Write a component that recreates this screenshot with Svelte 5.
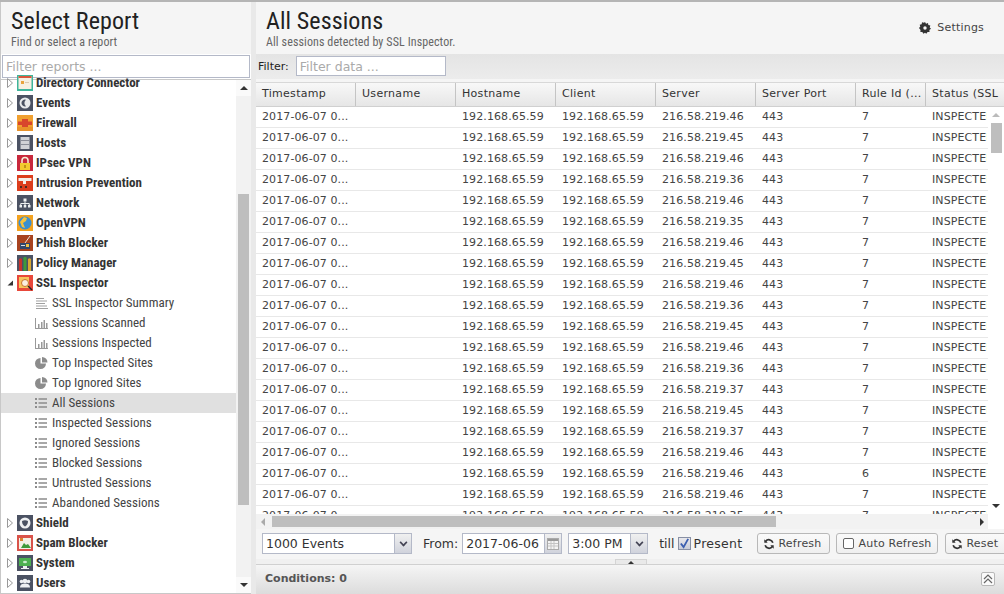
<script>
  const reports = [
    { name: "Directory Connector", icon: "directory" },
    { name: "Events", icon: "events" },
    { name: "Firewall", icon: "firewall" },
    { name: "Hosts", icon: "hosts" },
    { name: "IPsec VPN", icon: "ipsec" },
    { name: "Intrusion Prevention", icon: "intrusion" },
    { name: "Network", icon: "network" },
    { name: "OpenVPN", icon: "openvpn" },
    { name: "Phish Blocker", icon: "phish" },
    { name: "Policy Manager", icon: "policy" },
    { name: "SSL Inspector", icon: "ssl", open: true },
    { name: "Shield", icon: "shield" },
    { name: "Spam Blocker", icon: "spam" },
    { name: "System", icon: "system" },
    { name: "Users", icon: "users" }
  ];

  const sslReports = [
    { name: "SSL Inspector Summary", type: "text" },
    { name: "Sessions Scanned", type: "bars" },
    { name: "Sessions Inspected", type: "bars" },
    { name: "Top Inspected Sites", type: "pie" },
    { name: "Top Ignored Sites", type: "pie" },
    { name: "All Sessions", type: "list", selected: true },
    { name: "Inspected Sessions", type: "list" },
    { name: "Ignored Sessions", type: "list" },
    { name: "Blocked Sessions", type: "list" },
    { name: "Untrusted Sessions", type: "list" },
    { name: "Abandoned Sessions", type: "list" }
  ];

  const columns = [
    { title: "Timestamp", width: 100 },
    { title: "Username", width: 100 },
    { title: "Hostname", width: 100 },
    { title: "Client", width: 100 },
    { title: "Server", width: 100 },
    { title: "Server Port", width: 100 },
    { title: "Rule Id (...", width: 70 },
    { title: "Status (SSL", width: 100 }
  ];

  const servers = [46, 45, 46, 36, 46, 35, 46, 45, 46, 36, 45, 46, 36, 37, 45, 37, 46, 46, 46, 35, 46];
</script>

{#snippet reportIcon(icon)}
  <svg class="icon" viewBox="0 0 16 16" width="16" height="16">
    {#if icon === "directory"}
      <rect width="16" height="16" fill="#3fb59b" /><rect x="1.500" y="1" width="13" height="13" fill="#f6efe2" /><rect x="1.500" y="1" width="13" height="2" fill="#d9583b" /><rect x="4" y="6" width="3" height="3" fill="#e8a33d" /><rect x="8" y="7" width="4" height="1" fill="#d9c8b0" />
    {:else if icon === "events"}
      <rect width="16" height="16" fill="#4b5263" /><circle cx="8" cy="8" r="5.500" fill="#e8eaec" /><path d="M9 4.800a3.400 3.400 0 1 0 0 6.400 4 4 0 0 1 0-6.400z" fill="#4b5263" />
    {:else if icon === "firewall"}
      <rect width="16" height="16" fill="#f0a030" /><rect x="1" y="6.500" width="14" height="3.500" fill="#d8452c" /><rect x="5" y="4" width="6" height="8" fill="#d8452c" /><rect y="12" width="16" height="4" fill="#e8922a" />
    {:else if icon === "hosts"}
      <rect width="16" height="16" fill="#4b5263" /><rect x="3.500" y="2" width="9" height="12" fill="#d0d2d6" /><path d="M3.500 5.500h9M3.500 9.500h9" stroke="#8a8e98" />
    {:else if icon === "ipsec"}
      <rect width="16" height="16" fill="#c8283c" /><path d="M5 8V5.500a3 3 0 0 1 6 0V8" fill="none" stroke="#f6f0d8" stroke-width="1.500" /><rect x="3" y="8" width="10" height="7" fill="#f3c92f" /><rect x="7.300" y="10" width="1.400" height="3" fill="#a87c10" />
    {:else if icon === "intrusion"}
      <rect width="16" height="16" fill="#dc3d1c" /><path d="M1.500 3h13v3H9v3H6V6H1.500z" fill="#f4eee8" /><rect x="3" y="11" width="2" height="2" fill="#4a2a22" /><rect x="8" y="11" width="2" height="2" fill="#4a2a22" />
    {:else if icon === "network"}
      <rect width="16" height="16" fill="#4b5263" /><path d="M6.500 3.500h3v3h-3zM2.500 10h2.500v2.500H2.500zM6.750 10h2.500v2.500h-2.500zM11 10h2.500v2.500H11z" fill="#eef0f2" /><path d="M8 6.500V10M3.750 10V8.500h8.500V10" fill="none" stroke="#eef0f2" />
    {:else if icon === "openvpn"}
      <rect width="16" height="16" fill="#f3a21f" /><circle cx="8" cy="8" r="6.500" fill="#3a8fd0" /><path d="M7 2l3 1-1 3-3 2 2 5-3-1-2-5z" fill="#f6c23e" />
    {:else if icon === "phish"}
      <rect width="16" height="16" fill="#a8431f" /><path d="M13 1L8 8" stroke="#e8e0d8" /><rect x="3" y="8" width="10" height="6" fill="#30476b" /><rect x="9" y="9" width="3" height="3" fill="#f0c040" /><rect x="4" y="10" width="4" height="1" fill="#d8dee8" />
    {:else if icon === "policy"}
      <rect width="16" height="16" fill="#4b5263" /><rect x="2" y="6" width="3" height="10" fill="#c8322c" /><rect x="6.500" y="4" width="3" height="12" fill="#3f9a3a" /><rect x="11" y="6" width="3" height="10" fill="#d8a832" /><circle cx="3.500" cy="5" r="1.700" fill="#c8322c" /><circle cx="8" cy="3.500" r="1.700" fill="#3f9a3a" /><circle cx="12.500" cy="5" r="1.700" fill="#d8a832" />
    {:else if icon === "ssl"}
      <rect width="16" height="16" fill="#e8483a" /><rect x="2" y="2" width="10" height="11" fill="#f6c55c" /><circle cx="8" cy="8" r="3.500" fill="#fbeee0" stroke="#c9732c" /><path d="M11 11l4 4" stroke="#222" stroke-width="1.500" />
    {:else if icon === "shield"}
      <rect width="16" height="16" fill="#4b5263" /><circle cx="8" cy="8" r="5.500" fill="#eef0f2" /><path d="M5 6q3-1.500 6 0 0 3.500-3 5.500Q5 9.500 5 6z" fill="#4b5263" />
    {:else if icon === "spam"}
      <rect width="16" height="16" fill="#d9534a" /><rect x="2" y="3" width="12" height="11" fill="#f3f0e4" /><path d="M4 13l3-5 2 2 2-1 3 4z" fill="#3f9a3a" /><rect x="3" y="3" width="3" height="3" fill="#d9832c" />
    {:else if icon === "system"}
      <rect width="16" height="16" fill="#4b5263" /><rect x="2" y="3" width="12" height="8" fill="#4caf50" /><ellipse cx="8" cy="7" rx="2" ry="1.300" fill="#c8eccb" /><rect x="6" y="11" width="4" height="2" fill="#eef0f2" /><rect x="4" y="13" width="8" height="1" fill="#eef0f2" />
    {:else if icon === "users"}
      <rect width="16" height="16" fill="#4b5263" /><circle cx="4.500" cy="6.500" r="1.800" fill="#eef0f2" /><circle cx="11.500" cy="6.500" r="1.800" fill="#eef0f2" /><circle cx="8" cy="6" r="2.300" fill="#eef0f2" /><path d="M3 12.500q0-4 5-4t5 4z" fill="#eef0f2" />
    {/if}
  </svg>
{/snippet}

{#snippet leafIcon(type)}
  <svg class="leaf-icon" viewBox="0 0 13 14" width="13" height="14" fill="#8c8c8c">
    {#if type === "text"}
      <path d="M1 2h8v1H1zM1 4.500h11v1H1zM1 7h9v1H1zM1 9.500h11v1H1zM1 12h12v1H1z" fill="#a0a0a0" />
    {:else if type === "bars"}
      <path d="M0 2h1v10h12v1H0zM3 8h1.500v4H3zM6 6h1.500v6H6zM8.500 4H10v8H8.500zM11 7h1.500v5H11z" fill="#999" />
    {:else if type === "pie"}
      <path d="M5.500 2a5.500 5.500 0 1 0 5.500 5.500H5.500z" /><path d="M7 1a5.500 5.500 0 0 1 5.500 5.500H7z" />
    {:else}
      <path d="M0 2h2v2H0zM0 6h2v2H0zM0 10h2v2H0zM3.500 2.300H12v1.500H3.500zM3.500 6.300H12v1.500H3.500zM3.500 10.300H12v1.500H3.500z" />
    {/if}
  </svg>
{/snippet}

{#snippet refreshIcon()}
  <svg class="btn-icon" viewBox="0 0 14 14" width="12" height="12">
    <path d="M11.500 5.500A4.800 4.800 0 0 0 3 4M2.500 8.500A4.800 4.800 0 0 0 11 10" fill="none" stroke="#333" stroke-width="2" />
    <path d="M1.500 1.500v4h4zM12.500 12.500v-4h-4z" fill="#333" />
  </svg>
{/snippet}

<div class="page">
  <aside class="left">
    <header class="head">
      <h1>Select Report</h1>
      <p>Find or select a report</p>
    </header>
    <input class="tree-filter" placeholder="Filter reports ..." />
    <div class="tree-wrap">
      <div class="tree">
        {#each reports as report}
          <div class="node">
            {#if report.open}
              <svg class="arrow" viewBox="0 0 6 10" width="6" height="10"><path d="M6 2.500v5H0.500z" fill="#333" /></svg>
            {:else}
              <svg class="arrow" viewBox="0 0 6 10" width="6" height="10"><path d="M0.500 0.500L5.500 5 0.500 9.500z" fill="#fff" stroke="#999" /></svg>
            {/if}
            {@render reportIcon(report.icon)}
            <span class="node-name">{report.name}</span>
          </div>
          {#if report.open}
            {#each sslReports as leaf}
              <div class={leaf.selected ? "leaf selected" : "leaf"}>
                {@render leafIcon(leaf.type)}
                <span class="leaf-name">{leaf.name}</span>
              </div>
            {/each}
          {/if}
        {/each}
      </div>
      <div class="tree-scroll">
        <span class="tri up"></span>
        <div class="tree-track"><div class="tree-thumb"></div></div>
        <span class="tri down"></span>
      </div>
    </div>
  </aside>

  <main class="right">
    <header class="head main-head">
      <div>
        <h1>All Sessions</h1>
        <p>All sessions detected by SSL Inspector.</p>
      </div>
      <button class="settings">
        <svg viewBox="0 0 14 14" width="12" height="12">
          <path d="M7 0l1.200 2 2.300-.7.400 2.300 2.300.5-.7 2.200 1.500 1.700-1.900 1.300.2 2.300-2.300.1L8.500 13.800 7 12.500l-1.900 1.300-1.200-2-2.300-.1.200-2.300L0 7l1.500-1.700L.8 3.100l2.300-.5.400-2.300 2.300.7z" fill="#333" />
          <circle cx="7" cy="7" r="2" fill="#f5f5f5" />
        </svg>
        Settings
      </button>
    </header>

    <div class="filter-bar">
      <span>Filter:</span>
      <input placeholder="Filter data ..." />
    </div>

    <div class="grid">
      <div class="grid-head">
        {#each columns as col}
          <div class="th" style="width: {col.width}px">{col.title}</div>
        {/each}
      </div>
      <div class="grid-body">
        <div class="rows">
          {#each servers as server, i}
            <div class="row">
              <div class="td" style="width: 100px">2017-06-07 0...</div>
              <div class="td" style="width: 100px"></div>
              <div class="td" style="width: 100px">192.168.65.59</div>
              <div class="td" style="width: 100px">192.168.65.59</div>
              <div class="td" style="width: 100px">216.58.219.{server}</div>
              <div class="td" style="width: 100px">443</div>
              <div class="td" style="width: 70px">{i === 17 ? 6 : 7}</div>
              <div class="td" style="width: 61px">INSPECTED</div>
            </div>
          {/each}
        </div>
        <div class="v-scroll">
          <span class="tri up light"></span>
          <div class="v-track"><div class="v-thumb"></div></div>
          <span class="tri down"></span>
        </div>
      </div>
      <div class="h-scroll">
        <span class="tri left-tri"></span>
        <div class="h-track"><div class="h-thumb"></div></div>
        <span class="tri right-tri"></span>
        <div class="corner"></div>
      </div>
    </div>

    <div class="toolbar">
      <div class="combo events">
        <span class="combo-value">1000 Events</span>
        <span class="combo-btn"><span class="chev"></span></span>
      </div>
      <span class="from">From:</span>
      <div class="combo date">
        <span class="combo-value">2017-06-06</span>
        <span class="combo-btn">
          <svg viewBox="0 0 12 12" width="12" height="12">
            <rect x="0.500" y="0.500" width="11" height="11" fill="#f4f4f4" stroke="#aaa" />
            <rect x="1" y="1" width="10" height="2" fill="#999" />
            <path d="M1 5.500h10M1 8h10M4 3v8M7 3v8" stroke="#c4c4c4" fill="none" />
          </svg>
        </span>
      </div>
      <div class="combo time">
        <span class="combo-value">3:00 PM</span>
        <span class="combo-btn"><span class="chev"></span></span>
      </div>
      <span class="till">till</span>
      <span class="check">
        <svg viewBox="0 0 12 12" width="11" height="11"><path d="M2 6l3 4 5-9" fill="none" stroke="#3b5fb0" stroke-width="2" /></svg>
      </span>
      <span class="present">Present</span>
      <button class="btn refresh">{@render refreshIcon()} Refresh</button>
      <button class="btn auto"><span class="auto-box"></span> Auto Refresh</button>
      <button class="btn reset">{@render refreshIcon()} Reset</button>
    </div>

    <div class="split">
      <span class="split-handle"><span class="tri up small"></span></span>
    </div>

    <div class="conditions">
      <strong>Conditions: 0</strong>
      <span class="collapse">
        <svg viewBox="0 0 10 10" width="10" height="10"><path d="M1 5l4-4 4 4M1 9l4-4 4 4" fill="none" stroke="#666" stroke-width="1.200" /></svg>
      </span>
    </div>
  </main>
</div>

<style>
  :global(body) {
    margin: 0;
    background: #fff;
  }

  .page {
    display: flex;
    width: 1004px;
    height: 594px;
    overflow: hidden;
    box-sizing: border-box;
    border-top: 2px solid #b5b5b5;
    background: #e9e9e9;
    font-family: "DejaVu Sans", sans-serif;
    color: #333;
  }

  .left {
    width: 251px;
    flex: none;
    display: flex;
    flex-direction: column;
    border-left: 1px solid #c8c8c8;
    box-sizing: border-box;
    background: #fff;
  }

  .right {
    flex: 1;
    min-width: 0;
    margin-left: 5px;
    display: flex;
    flex-direction: column;
    background: #f5f5f5;
  }

  .head {
    height: 52px;
    flex: none;
    box-sizing: border-box;
    padding: 6px 0 0 10px;
    background: #f5f5f5;
  }

  .head h1 {
    margin: 0;
    font: 400 24px/27px Roboto, sans-serif;
    font-stretch: condensed;
    letter-spacing: 0.1px;
    color: #222;
  }

  .head p {
    margin: 0;
    font: 400 12px/14px Roboto, sans-serif;
    font-stretch: condensed;
    letter-spacing: 0.1px;
    color: #666;
  }

  .tree-filter {
    height: 23px;
    flex: none;
    margin: 1px 0 1px 1px;
    width: 248px;
    box-sizing: border-box;
    padding: 0 3px;
    border: 1px solid #b4b9c8;
    font: 12.500px "DejaVu Sans", sans-serif;
    outline: none;
  }

  input::placeholder {
    color: #aaa;
    opacity: 1;
  }

  .tree-wrap {
    flex: 1;
    min-height: 0;
    display: flex;
    border-top: 1px solid #c8c8c8;
    border-bottom: 1px solid #c8c8c8;
    background: #fff;
  }

  .tree {
    flex: 1;
    min-width: 0;
    margin-top: -7px;
  }

  .node,
  .leaf {
    height: 20px;
    display: flex;
    align-items: center;
    font-family: Roboto, sans-serif;
    font-stretch: condensed;
    font-size: 13px;
    white-space: nowrap;
  }

  .node {
    padding-left: 6px;
    font-weight: 700;
    color: #333;
  }

  .arrow {
    flex: none;
    margin-right: 4px;
  }

  .icon {
    flex: none;
    margin-right: 3px;
  }

  .node-name {
    line-height: 16px;
  }

  .leaf {
    padding-left: 34px;
    gap: 4px;
    color: #444;
  }

  .leaf-name {
    margin-bottom: 2px;
  }

  .leaf.selected {
    background: #e0e0e0;
  }

  .tree-scroll {
    width: 15px;
    flex: none;
    display: flex;
    flex-direction: column;
    align-items: center;
    background: #fafafa;
  }

  .tree-track {
    flex: 1;
    width: 100%;
    background: #f2f2f2;
    padding-top: 98px;
    box-sizing: border-box;
  }

  .tree-thumb {
    width: 11px;
    height: 311px;
    margin: 0 2px;
    background: #bebebe;
  }

  .tri {
    display: block;
    width: 0;
    height: 0;
    flex: none;
    border-style: solid;
    border-color: transparent;
  }

  .tri.up {
    margin: 6px 0;
    border-width: 0 4px 4px;
    border-bottom-color: #333;
  }

  .tri.up.light {
    border-bottom-color: #bbb;
  }

  .tri.down {
    margin: 6px 0;
    border-width: 4px 4px 0;
    border-top-color: #333;
  }

  .tri.small {
    margin: 0;
    border-width: 0 3px 3px;
  }

  .left-tri {
    margin: 0 7px 0 5px;
    border-width: 4px 4px 4px 0;
    border-right-color: #aaa;
  }

  .right-tri {
    margin: 0 4px;
    border-width: 4px 0 4px 4px;
    border-left-color: #333;
  }

  .main-head {
    display: flex;
    justify-content: space-between;
    padding-left: 10px;
  }

  .settings {
    align-self: flex-start;
    margin: 13px 20px 0 0;
    padding: 0;
    display: flex;
    align-items: center;
    gap: 6px;
    border: 0;
    background: none;
    font: 11px "DejaVu Sans", sans-serif;
    letter-spacing: 0.2px;
    color: #444;
  }

  .filter-bar {
    height: 25px;
    flex: none;
    display: flex;
    align-items: center;
    gap: 7px;
    padding: 0 0 1px 2px;
    box-sizing: border-box;
    background: linear-gradient(#e4e4e4, #ececec);
    font-size: 11px;
    color: #222;
  }

  .filter-bar input {
    width: 150px;
    height: 20px;
    box-sizing: border-box;
    padding: 0 3px;
    border: 1px solid #b4b9c8;
    font: 12.500px "DejaVu Sans", sans-serif;
    outline: none;
  }

  .grid {
    flex: none;
    margin-top: 3px;
    border-top: 1px solid #d8d8d8;
    background: #fff;
    overflow: hidden;
  }

  .grid-head {
    display: flex;
    height: 23px;
    background: linear-gradient(#f8f8f8, #e6e6e6);
    border-bottom: 1px solid #d0d0d0;
  }

  .th {
    flex: none;
    box-sizing: border-box;
    padding-left: 6px;
    border-right: 1px solid #c4c4c4;
    font-size: 11px;
    letter-spacing: 0.3px;
    line-height: 22px;
    color: #333;
    white-space: nowrap;
    overflow: hidden;
  }

  .grid-body {
    display: flex;
    height: 407px;
    overflow: hidden;
  }

  .rows {
    width: 732px;
    flex: none;
    overflow: hidden;
  }

  .row {
    display: flex;
    height: 21px;
    box-sizing: border-box;
    border-bottom: 1px solid #e8e8e8;
  }

  .td {
    flex: none;
    box-sizing: border-box;
    padding-left: 6px;
    font-size: 11px;
    letter-spacing: 0.1px;
    line-height: 20px;
    color: #444;
    white-space: nowrap;
    overflow: hidden;
  }

  .v-scroll {
    width: 16px;
    flex: none;
    display: flex;
    flex-direction: column;
    align-items: center;
    background: #fff;
  }

  .v-track {
    flex: 1;
    width: 100%;
  }

  .v-thumb {
    width: 11px;
    height: 30px;
    margin: 0 auto;
    background: #bebebe;
  }

  .h-scroll {
    display: flex;
    align-items: center;
    height: 15px;
    background: #f2f2f2;
  }

  .h-track {
    width: 704px;
    flex: none;
  }

  .h-thumb {
    width: 504px;
    height: 11px;
    background: #bebebe;
  }

  .corner {
    width: 16px;
    height: 15px;
    margin-left: auto;
    background: #fff;
  }

  .toolbar {
    height: 30px;
    flex: none;
    display: flex;
    align-items: center;
    padding: 0 0 1px 6px;
    box-sizing: border-box;
    font-size: 12.500px;
    color: #333;
    white-space: nowrap;
    background: #f5f5f5;
  }

  .combo {
    display: flex;
    height: 21px;
    box-sizing: border-box;
    border: 1px solid #b4b9c8;
    background: #fff;
    flex: none;
  }

  .combo-value {
    flex: 1;
    padding-left: 3px;
    line-height: 19px;
  }

  .combo-btn {
    width: 16px;
    flex: none;
    display: flex;
    align-items: center;
    justify-content: center;
    border-left: 1px solid #b4b9c8;
    background: linear-gradient(#f0f0f0, #d0d3dc);
  }

  .chev {
    width: 5px;
    height: 5px;
    margin-top: -3px;
    border-right: 2px solid #445;
    border-bottom: 2px solid #445;
    transform: rotate(45deg) scale(0.8);
  }

  .events {
    width: 150px;
  }

  .from {
    margin-left: 11px;
  }

  .date {
    width: 100px;
    margin-left: 4px;
  }

  .time {
    width: 80px;
    margin-left: 6px;
  }

  .till {
    margin-left: 11px;
  }

  .check {
    width: 13px;
    height: 13px;
    margin-left: 3px;
    flex: none;
    box-sizing: border-box;
    display: flex;
    align-items: center;
    justify-content: center;
    border: 1px solid #8890a4;
    background: linear-gradient(#e8e8ec, #c8ccd8);
  }

  .present {
    margin-left: 3px;
    letter-spacing: 0.3px;
  }

  .btn {
    height: 21px;
    flex: none;
    display: flex;
    align-items: center;
    gap: 4px;
    box-sizing: border-box;
    padding: 0 5px;
    border: 1px solid #b8b8b8;
    border-radius: 3px;
    background: linear-gradient(#fafafa, #efefef);
    font: 11px "DejaVu Sans", sans-serif;
    letter-spacing: 0.2px;
    color: #444;
  }

  .refresh {
    width: 73px;
    margin-left: 14px;
  }

  .auto {
    width: 102px;
    margin-left: 6px;
    padding-left: 6px;
    gap: 5px;
  }

  .reset {
    width: 70px;
    margin-left: 7px;
  }

  .auto-box {
    width: 9px;
    height: 9px;
    border: 1px solid #666;
    border-radius: 2px;
    background: #fff;
  }

  .split {
    height: 5px;
    flex: none;
    display: flex;
    justify-content: center;
    padding-left: 2px;
    background: #f0f0f0;
  }

  .split-handle {
    width: 32px;
    height: 5px;
    display: flex;
    justify-content: center;
    align-items: center;
    box-sizing: border-box;
    border: 1px solid #d4d4d4;
    border-bottom: 0;
    background: #e9e9e9;
  }

  .conditions {
    flex: 1;
    min-height: 0;
    display: flex;
    align-items: center;
    justify-content: space-between;
    padding: 0 9px 2px 9px;
    border-top: 1px solid #d0d0d0;
    background: linear-gradient(#f5f5f5, #dcdcdc);
    font-size: 11px;
  }

  .conditions strong {
    color: #555;
  }

  .collapse {
    width: 14px;
    height: 14px;
    box-sizing: border-box;
    display: flex;
    align-items: center;
    justify-content: center;
    border: 1px solid #b8b8b8;
    border-radius: 2px;
    background: #fafafa;
  }
</style>
